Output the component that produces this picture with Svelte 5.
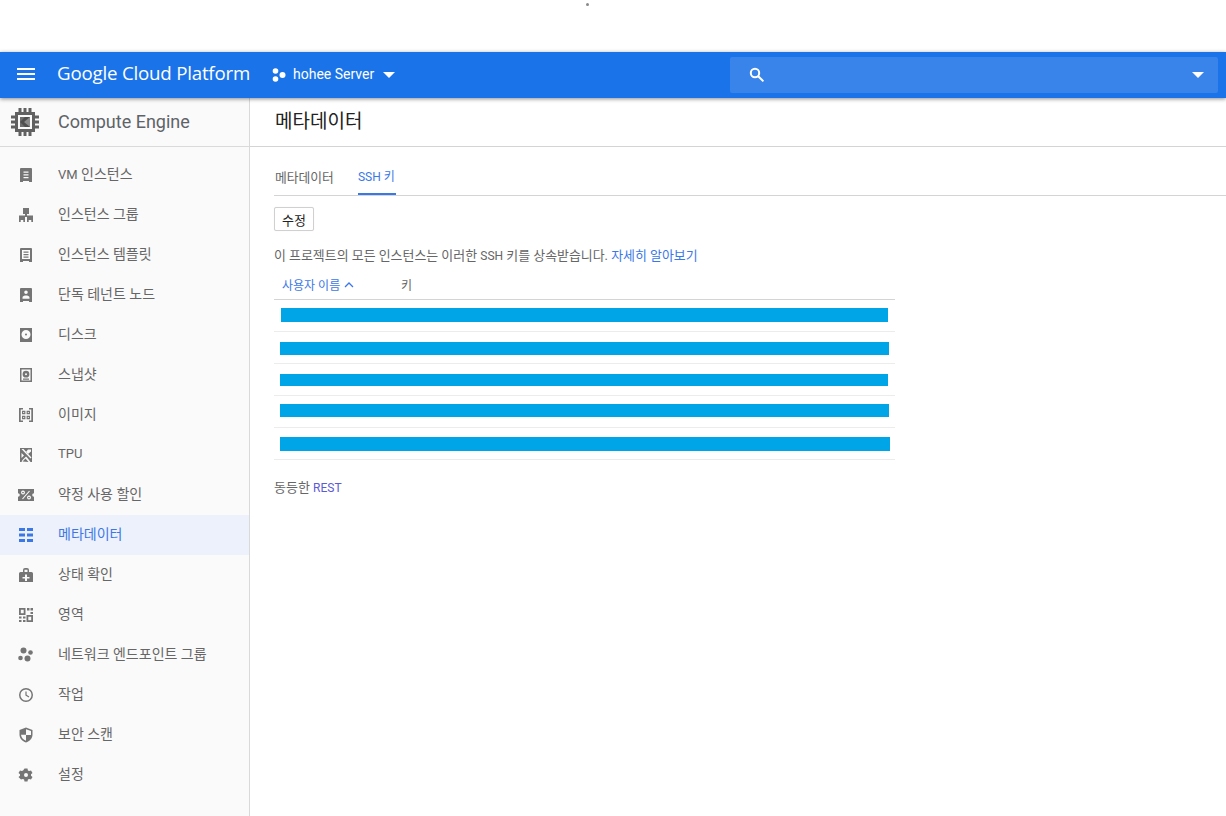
<script>
  const nav = [
    { label: 'VM 인스턴스', icon: 'vm' },
    { label: '인스턴스 그룹', icon: 'group' },
    { label: '인스턴스 템플릿', icon: 'template' },
    { label: '단독 테넌트 노드', icon: 'tenant' },
    { label: '디스크', icon: 'disk' },
    { label: '스냅샷', icon: 'snapshot' },
    { label: '이미지', icon: 'image' },
    { label: 'TPU', icon: 'tpu' },
    { label: '약정 사용 할인', icon: 'percent' },
    { label: '메타데이터', icon: 'meta', active: true },
    { label: '상태 확인', icon: 'health' },
    { label: '영역', icon: 'zone' },
    { label: '네트워크 엔드포인트 그룹', icon: 'dots' },
    { label: '작업', icon: 'clock' },
    { label: '보안 스캔', icon: 'shield' },
    { label: '설정', icon: 'gear' }
  ];
  const bars = [
    { ml: 7, w: 607, t: 9, h: 14 },
    { ml: 6, w: 609, t: 11, h: 13 },
    { ml: 6, w: 608, t: 11, h: 12 },
    { ml: 6, w: 609, t: 9, h: 13 },
    { ml: 6, w: 610, t: 10, h: 14 }
  ];
  const runs = (s) => s.split(/([A-Za-z]+)/).filter(Boolean).map((t) => ({ t, lat: /^[A-Za-z]+$/.test(t) }));
</script>

<div class="page">
  <div class="topgap"><span class="dot"></span></div>
  <header class="bar">
    <svg class="burger" width="18" height="12" viewBox="0 0 18 12"><path d="M0 0h18v2H0zM0 5h18v2H0zM0 10h18v2H0z" fill="#fff"/></svg>
    <span class="brand">Google Cloud Platform</span>
    <div class="project">
      <svg width="14" height="14" viewBox="0 0 14 14" fill="#fff"><circle cx="3.5" cy="3" r="2.8"/><circle cx="3.5" cy="11" r="2.8"/><circle cx="10.5" cy="7" r="3"/></svg>
      <span>hohee Server</span>
      <svg class="caret" width="12" height="6" viewBox="0 0 12 6"><path d="M0 0h12L6 6z" fill="#fff"/></svg>
    </div>
    <div class="search">
      <svg width="16" height="16" viewBox="0 0 16 16" fill="none" stroke="#fff" stroke-width="2"><circle cx="6" cy="6" r="4.2"/><path d="M9.2 9.2l5.2 5.2"/></svg>
      <svg class="caret" width="12" height="6" viewBox="0 0 12 6"><path d="M0 0h12L6 6z" fill="#fff"/></svg>
    </div>
  </header>

  <div class="body">
    <aside class="side">
      <div class="product">
        <svg width="30" height="30" viewBox="0 0 30 30" fill="#616161">
          <path fill-rule="evenodd" d="M5 5h20v20H5zM8 8v14h14V8z"/>
          <path d="M10 10h10v10H10z" fill="#6e6e6e"/>
          <path d="M10 15l5-5h5v10h-5z" fill="#4f4f4f"/>
          <path d="M14 15l6-5v10z" fill="#8a8a8a"/>
          <path d="M8.500 1h3v4h-3zM13.500 1h3v4h-3zM18.500 1h3v4h-3zM8.500 25h3v4h-3zM13.500 25h3v4h-3zM18.500 25h3v4h-3zM1 8.500h4v3H1zM1 13.500h4v3H1zM1 18.500h4v3H1zM25 8.500h4v3h-4zM25 13.500h4v3h-4zM25 18.500h4v3h-4z"/>
        </svg>
        <span>Compute Engine</span>
      </div>
      <nav class="nav">
        {#each nav as item}
          <div class="item" class:active={item.active}>
            <svg class="ico" width="16" height="16" viewBox="0 0 16 16" fill={item.active ? '#3b78e7' : '#757575'}>
              {#if item.icon === 'vm'}
                <path fill-rule="evenodd" d="M3 1h10a1 1 0 0 1 1 1v13h-3v-1H5v1H2V2a1 1 0 0 1 1-1zM5.500 4.500v1.200h5V4.500zm0 2.800v1.200h5V7.300zm0 2.800v1.200h5v-1.200z"/>
              {:else if item.icon === 'group'}
                <path d="M5 1h6v6H5zM1 8.500h6V15H5.300v-2H2.700v2H1zM9 8.500h6V15h-1.700v-2h-2.600v2H9zM7 7h2v3H7z"/>
              {:else if item.icon === 'template'}
                <path fill-rule="evenodd" d="M3 1h10a1 1 0 0 1 1 1v13h-3v-1H5v1H2V2a1 1 0 0 1 1-1zM4 3v9h8V3zM5.500 4.500h5v1.200h-5zm0 2.500h5v1.200h-5zm0 2.500h5v1.200h-5z"/>
              {:else if item.icon === 'tenant'}
                <path fill-rule="evenodd" d="M3 1h10a1 1 0 0 1 1 1v13h-3v-1H5v1H2V2a1 1 0 0 1 1-1zM8 3.500a1.800 1.800 0 1 0 0 3.600 1.800 1.800 0 0 0 0-3.600zM4.500 10.500v1.200h7v-1.200C11.500 9 9.500 8.500 8 8.500S4.500 9 4.500 10.500z"/>
              {:else if item.icon === 'disk'}
                <path fill-rule="evenodd" d="M2 1h12v14H2zM8 3a4.500 4.500 0 1 0 0 9 4.500 4.500 0 0 0 0-9zm0 3.500a1 1 0 1 1 0 2 1 1 0 0 1 0-2z"/>
              {:else if item.icon === 'snapshot'}
                <path fill-rule="evenodd" d="M2 1h12v14H2zM3.500 2.500v11h9v-11zM8 3.800a3.400 3.400 0 1 1 0 6.800 3.400 3.400 0 0 1 0-6.800zm0 2.400a1 1 0 1 0 0 2 1 1 0 0 0 0-2zM5 11.500h6v1.200H5z"/>
              {:else if item.icon === 'image'}
                <path fill-rule="evenodd" d="M1 1h4v1.600H2.700v10.800H5V15H1zM15 1h-4v1.600h2.300v10.800H11V15h4zM4 3.800h3.400v3.400H4zM8.600 3.800H12v3.400H8.600zM4 8.800h3.400v3.400H4zM8.600 8.800H12v3.400H8.600zM5.200 5v1h1V5zM9.800 5v1h1V5zM5.200 10v1h1v-1zM9.800 10v1h1v-1z"/>
              {:else if item.icon === 'tpu'}
                <path fill-rule="evenodd" d="M2 1h12v14h-1.500L9.500 11 8 9.500 4.500 13 3.500 15H2zM3.500 2l9 9.500 1-1L5.500 2zM3.500 6v5l2.500-2.500zM10 2.500L8 5l2 2 3-2.500V2.500zM4.500 14.500l3-3 3 3.500z"/>
              {:else if item.icon === 'percent'}
                <path d="M0 2h16v4.200a1.800 1.800 0 0 0 0 3.600V14H0V9.800a1.800 1.800 0 0 0 0-3.600z"/>
                <g fill="none" stroke="#fff" stroke-width="1.100"><path d="M4.500 12l7-8"/><circle cx="5" cy="5.500" r="1.400"/><circle cx="11" cy="10.500" r="1.400"/></g>
              {:else if item.icon === 'meta'}
                <path d="M1 1h6v3H1zM9 1h6v3H9zM1 6.500h6v3H1zM9 6.500h6v3H9zM1 12h6v3H1zM9 12h6v3H9z"/>
              {:else if item.icon === 'health'}
                <path fill-rule="evenodd" d="M5 5V3a2 2 0 0 1 2-2h2a2 2 0 0 1 2 2v2h2.500A1.500 1.500 0 0 1 15 6.500V15H1V6.500A1.500 1.500 0 0 1 2.500 5zm1.500 0h3V2.800h-3zM7 7.500V10H4.500v1.600H7V14h2v-2.400h2.500V10H9V7.500z"/>
              {:else if item.icon === 'zone'}
                <path fill-rule="evenodd" d="M1 1h6.500v7H1zM2.800 2.800v3.400h2.900V2.800zM9 1h2.500v2.500H9zM12.500 1H15v2.500h-2.500zM12.500 5H15v2H12.500zM1 9.500h2.500v2H1zM5 9.500h2.500v2H5zM1 13h2.500v2H1zM5 13h2.500v2H5zM8.500 8H15v7H8.500zM10.300 9.800v3.400h2.900V9.800z"/>
              {:else if item.icon === 'dots'}
                <circle cx="5.500" cy="3.500" r="3"/><circle cx="12.500" cy="5.500" r="2.300"/><circle cx="2.500" cy="11" r="2.300"/><circle cx="9.500" cy="11.500" r="3"/>
              {:else if item.icon === 'clock'}
                <path fill-rule="evenodd" d="M8 1a7 7 0 1 1 0 14A7 7 0 0 1 8 1zm0 1.500a5.500 5.500 0 1 0 0 11 5.500 5.500 0 0 0 0-11zM7.400 4.500h1.200v3.300l2.700 1.600-.6 1-3.300-2z"/>
              {:else if item.icon === 'shield'}
                <path fill-rule="evenodd" d="M8 .500l6.500 2.500v4.500c0 3.800-2.800 6.900-6.500 8-3.700-1.100-6.500-4.200-6.500-8V3zM8 2.200v5.600H3c.3 2.800 2.300 5 5 6V8h5V4z"/>
              {:else if item.icon === 'gear'}
                <path fill-rule="evenodd" d="M6.500 1h3l.4 2 1.200.7 1.900-.7 1.500 2.600-1.500 1.300v1.400l1.500 1.300-1.500 2.600-1.900-.7-1.200.7-.4 2h-3l-.4-2-1.200-.7-1.900.7L.500 9.600 2 8.300V6.900L.500 5.600 2 3l1.900.7L5.100 3zM8 5.500a2 2 0 1 0 0 4 2 2 0 0 0 0-4z" transform="translate(0 .400)"/>
              {/if}
            </svg>
            <span class="lbl">{#each runs(item.label) as r}{#if r.lat}<span class="lat">{r.t}</span>{:else}<span class="ko">{r.t}</span>{/if}{/each}</span>
          </div>
        {/each}
      </nav>
    </aside>

    <main class="main">
      <div class="title">메타데이터</div>
      <div class="content">
        <div class="tabs">
          <span class="tab">메타데이터</span>
          <span class="tab on"><span class="lat12">SSH</span> 키</span>
        </div>
        <button class="edit">수정</button>
        <p class="desc">이 프로젝트의 모든 인스턴스는 이러한 <span class="lat12">SSH</span> 키를 상속받습니다. <span class="link">자세히 알아보기</span></p>
        <div class="table">
          <div class="thead">
            <span class="th-user">사용자 이름
              <svg width="10" height="6" viewBox="0 0 10 6" fill="none" stroke="#3b78e7" stroke-width="1.300"><path d="M1 5l4-4 4 4"/></svg>
            </span>
            <span class="th-key">키</span>
          </div>
          {#each bars as b}
            <div class="row">
              <div class="mask" style="margin-left:{b.ml}px;margin-top:{b.t - 1}px;width:{b.w}px;height:{b.h}px"></div>
            </div>
          {/each}
        </div>
        <p class="rest">동등한 <span class="rest-link">REST</span></p>
      </div>
    </main>
  </div>
</div>

<style>
  :global(body) { margin: 0; background: #fff; }
  .page {
    width: 1226px; height: 816px; overflow: hidden; display: flex; flex-direction: column;
    font-family: Roboto, "Noto Sans CJK KR", sans-serif; font-size: 13px; color: #5f6368;
  }
  .topgap { height: 52px; flex: none; display: flex; justify-content: center; }
  .dot { width: 3px; height: 3px; border-radius: 50%; background: #8a8a8a; margin: 3px 0 0 -52px; }
  .bar {
    height: 46px; flex: none; background: #1a73e8; display: flex; align-items: center; position: relative; z-index: 2;
    box-shadow: 0 1px 4px rgba(0,0,0,.45);
  }
  .burger { margin-left: 17px; margin-top: -2px; }
  .brand { margin-left: 22px; width: 215px; font-family: "Open Sans", Roboto, sans-serif; color: #fff; font-size: 18.700px; letter-spacing: -.2px; white-space: nowrap; margin-top: -5px; }
  .project { display: flex; align-items: center; color: #fff; font-size: 14px; width: 458px; }
  .project svg:first-child { margin-top: -1px; }
  .project span { margin-left: 7px; margin-top: -2px; }
  .project .caret { margin-left: 9px; }
  .search {
    width: 488px; height: 36px; background: #3984eb; border-radius: 2px; display: flex; align-items: center; justify-content: space-between;
    padding: 0 14px 0 19px; box-sizing: border-box;
  }
  .search svg:first-child { margin-top: -1px; }
  .body { flex: 1; display: flex; min-height: 0; }
  .side { width: 249px; flex: none; background: #fafafa; border-right: 1px solid #d9d9d9; }
  .product { height: 48px; border-bottom: 1px solid #dadada; display: flex; align-items: center; padding-left: 10px; color: #5f6368; font-size: 18px; }
  .product svg { margin-top: -1px; }
  .product span { margin-left: 18px; margin-top: -2px; }
  .nav { padding-top: 8px; }
  .item { height: 40px; display: flex; align-items: center; padding-left: 18px; font-size: 14px; color: #666; }
  .item .lbl { margin-left: 24px; margin-top: -3px; }
  .ko { position: relative; top: -1px; }
  .lat { font-size: 13px; position: relative; top: -1px; }
  .lat12 { font-size: 12px; }
  .item.active { background: #ecf1fb; color: #3b78e7; }
  .ico { flex: none; }
  .main { flex: 1; min-width: 0; }
  .title { height: 48px; border-bottom: 1px solid #d4d4d4; padding-left: 25px; font-size: 19px; color: #222; line-height: 47px; }
  .content { padding-left: 24px; }
  .tabs { height: 49px; box-sizing: border-box; border-bottom: 1px solid #d4d4d4; display: flex; gap: 23px; align-items: flex-end; }
  .tab { height: 33px; padding: 0 1px; line-height: 31px; font-size: 12.800px; color: #666; box-sizing: border-box; }
  .tab.on { color: #3b78e7; border-bottom: 2px solid #3b78e7; font-size: 12px; padding: 0 1px 0 0; }
  .edit {
    display: block; margin: 11px 0 0; width: 40px; height: 24px; padding: 0; background: #fff; border: 1px solid #d0d0d0; border-radius: 2px;
    font: inherit; font-size: 13px; color: #222; box-shadow: 0 0 1px rgba(0,0,0,.1);
  }
  .desc { margin: 16px 0 0; line-height: 18px; height: 18px; font-size: 12.930px; color: #666; white-space: nowrap; }
  .link { color: #3b78e7; }
  .rest-link { color: #5b5bd6; font-size: 12px; }
  .table { width: 621px; margin-top: 8px; }
  .thead { height: 27px; box-sizing: border-box; border-bottom: 1px solid #d4d4d4; display: flex; padding-left: 8px; font-size: 12px; align-items: center; padding-bottom: 3px; color: #666; }
  .th-user { color: #3b78e7; width: 119px; display: flex; align-items: center; gap: 4px; white-space: nowrap; }
  .row { height: 32px; box-sizing: border-box; border-bottom: 1px solid #ececec; overflow: hidden; }
  .mask { background: #00a5e8; }
  .rest { margin: 19px 0 0; font-size: 13px; color: #666; line-height: 18px; }
</style>
